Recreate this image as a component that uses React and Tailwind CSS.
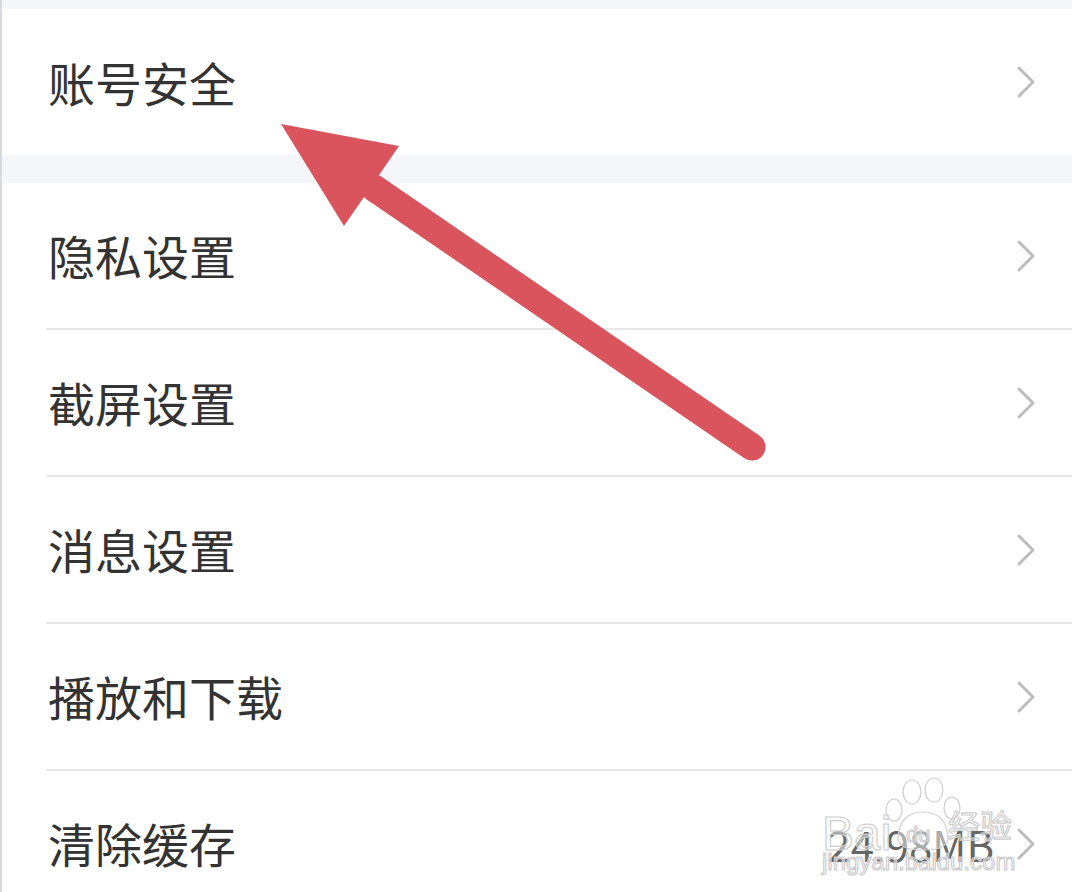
import React from 'react';

const Chevron = () => (
  <svg width="20" height="34" viewBox="0 0 20 34" className="shrink-0">
    <polyline points="3,3 17,17 3,31" fill="none" stroke="#bdbdbd" strokeWidth="3" strokeLinecap="round" strokeLinejoin="round" />
  </svg>
);

const Row = ({ label, value, divider = true, height = 'h-[145px]' }) => (
  <div className="relative">
    <div className={`flex items-center justify-between pl-[46px] pr-[36px] ${height}`}>
      <span className="text-[47px] text-[#333333]">{label}</span>
      <div className="flex items-center gap-[22px]">
        {value && <span className="text-[42px] text-[#666666]">{value}</span>}
        <Chevron />
      </div>
    </div>
    {divider && <div className="ml-[44px] h-[2px] bg-[#e8e8ea]" />}
  </div>
);

const Arrow = () => (
  <svg className="absolute inset-0 pointer-events-none" width="1072" height="892" viewBox="0 0 1072 892">
    <line x1="750" y1="447" x2="372" y2="188" stroke="#d9545d" strokeWidth="27" strokeLinecap="round" />
    <polygon points="279,124 397,146 342,226" fill="#d9545d" />
  </svg>
);

// faint "Baidu 经验" watermark over the bottom-right corner
const Watermark = () => (
  <svg className="absolute left-[800px] top-[770px] pointer-events-none" width="230" height="110" viewBox="0 0 230 110">
    <g fill="#ffffff" fillOpacity="0.45" stroke="#cdcdcd" strokeWidth="1.2">
      <ellipse cx="110" cy="22" rx="9" ry="12" />
      <ellipse cx="132" cy="20" rx="9" ry="12" />
      <ellipse cx="92" cy="40" rx="8" ry="11" />
      <ellipse cx="150" cy="38" rx="8" ry="11" />
      <path d="M96 66 C98 48 108 42 121 42 C134 42 144 48 146 66 C147 76 138 80 121 80 C104 80 95 76 96 66 Z" />
      <text x="20" y="80" fontSize="48" fontFamily="Liberation Sans, sans-serif">Bai</text>
      <text x="104" y="72" fontSize="22" fontFamily="Liberation Sans, sans-serif">du</text>
      <text x="146" y="68" fontSize="32" fontFamily="Noto Sans CJK SC, sans-serif">经验</text>
      <text x="20" y="100" fontSize="24" fontFamily="Liberation Sans, sans-serif">jingyan.baidu.com</text>
    </g>
  </svg>
);

export default function App() {
  return (
    <div
      className="relative w-[1072px] h-[892px] overflow-hidden bg-white border-l-2 border-[#d8d8de]"
      style={{ fontFamily: '"Noto Sans CJK SC", "Noto Sans", sans-serif' }}
    >
      <div className="h-[9px] bg-[#f5f6fa]" />
      <Row label="账号安全" divider={false} height="h-[146px]" />
      <div className="h-[28px] bg-[#f5f6fa]" />
      <Row label="隐私设置" />
      <Row label="截屏设置" />
      <Row label="消息设置" />
      <Row label="播放和下载" />
      <Row label="清除缓存" value="24.98MB" divider={false} />
      <Arrow />
      <Watermark />
    </div>
  );
}
